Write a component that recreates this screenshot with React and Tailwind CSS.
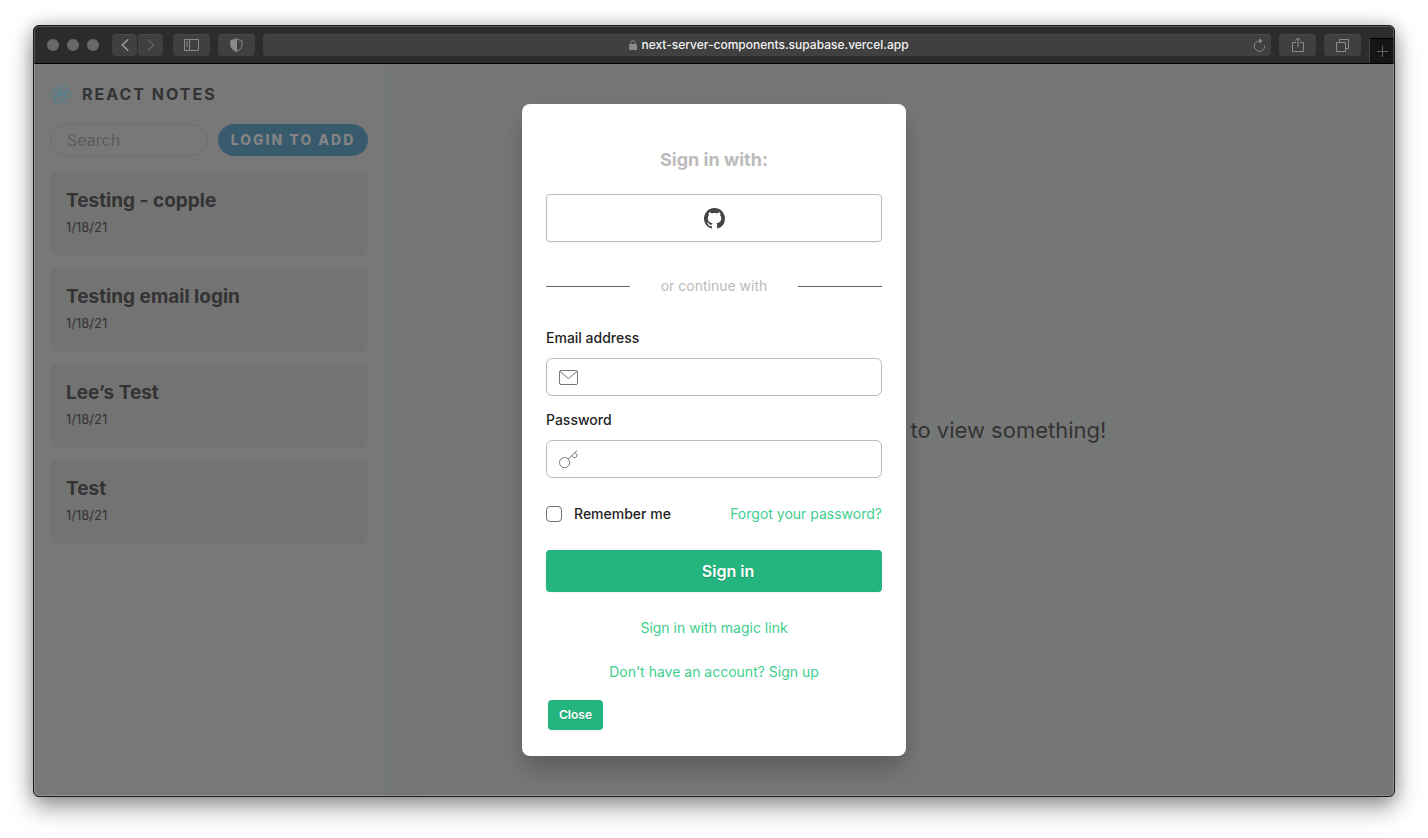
import { useState } from "react";

const notes = [
    { title: "Testing - copple", date: "1/18/21" },
    { title: "Testing email login", date: "1/18/21" },
    { title: "Lee’s Test", date: "1/18/21" },
    { title: "Test", date: "1/18/21" },
];

function ReactLogo() {
    return (
        <svg viewBox="-11.5 -10.5 23 21" className="h-[21px] w-[22px] text-[#4d8193]" fill="none" stroke="currentColor" strokeWidth="0.9" aria-hidden="true">
            <circle r="2" fill="currentColor" stroke="none" />
            <ellipse rx="11" ry="4.2" />
            <ellipse rx="11" ry="4.2" transform="rotate(60)" />
            <ellipse rx="11" ry="4.2" transform="rotate(120)" />
        </svg>
    );
}

function GithubIcon() {
    return (
        <svg viewBox="0 0 16 16" className="size-[21px]" fill="currentColor" aria-hidden="true">
            <path d="M8 0C3.58 0 0 3.58 0 8c0 3.54 2.29 6.53 5.47 7.59.4.07.55-.17.55-.38 0-.19-.01-.82-.01-1.49-2.01.37-2.53-.49-2.69-.94-.09-.23-.48-.94-.82-1.13-.28-.15-.68-.52-.01-.53.63-.01 1.08.58 1.23.82.72 1.21 1.87.87 2.33.66.07-.52.28-.87.51-1.07-1.78-.2-3.64-.89-3.64-3.95 0-.87.31-1.59.82-2.15-.08-.2-.36-1.02.08-2.12 0 0 .67-.21 2.2.82.64-.18 1.32-.27 2-.27s1.36.09 2 .27c1.53-1.04 2.2-.82 2.2-.82.44 1.1.16 1.92.08 2.12.51.56.82 1.27.82 2.15 0 3.07-1.87 3.75-3.65 3.95.29.25.54.73.54 1.48 0 1.07-.01 1.93-.01 2.2 0 .21.15.46.55.38A8.01 8.01 0 0 0 16 8c0-4.42-3.58-8-8-8z" />
        </svg>
    );
}

function MailIcon() {
    return (
        <svg viewBox="0 0 21 21" className="size-[21px]" fill="none" stroke="currentColor" strokeLinejoin="round" aria-hidden="true">
            <rect x="1.5" y="3.5" width="18" height="14" rx="1.5" />
            <path d="M2 4.5l8.5 7 8.5-7" />
        </svg>
    );
}

function KeyIcon() {
    return (
        <svg viewBox="0 0 21 21" className="size-[21px]" fill="none" stroke="currentColor" strokeLinecap="round" strokeLinejoin="round" aria-hidden="true">
            <circle cx="6.6" cy="13.6" r="5.1" />
            <path d="M10.2 10L18.8 1.8M13.8 6.6l2.2 2.2c1.600.2 3.200-1.300 3-2.900l-1.800-2.300" />
        </svg>
    );
}

function ToolButton({ label, className, children }) {
    return (
        <button
            aria-label={label}
            className={`flex h-[22px] shrink-0 items-center justify-center rounded border-t border-[#4a4a4a] bg-[#404040] text-[#8a8a8a] ${className}`}
        >
            {children}
        </button>
    );
}

function Toolbar() {
    return (
        <header className="flex h-[38px] items-center border-b border-black bg-[#2c2c2c]">
            <div className="flex gap-2 pl-[13px]">
                <span className="size-3 rounded-full bg-[#686868]" />
                <span className="size-3 rounded-full bg-[#686868]" />
                <span className="size-3 rounded-full bg-[#686868]" />
            </div>
            <div className="ml-[13px] flex gap-px">
                <ToolButton label="Back" className="w-[25px]">
                    <svg viewBox="0 0 8 12" className="h-3 w-2" fill="none" stroke="#a0a0a0" strokeWidth="1.4" strokeLinecap="round">
                        <path d="M6.8.7L1.2 6l5.6 5.3" />
                    </svg>
                </ToolButton>
                <ToolButton label="Forward" className="w-[25px]">
                    <svg viewBox="0 0 8 12" className="h-3 w-2" fill="none" stroke="#606060" strokeWidth="1.4" strokeLinecap="round">
                        <path d="M1.2.7L6.8 6l-5.6 5.3" />
                    </svg>
                </ToolButton>
            </div>
            <ToolButton label="Sidebar" className="ml-[10px] w-[37px]">
                <svg viewBox="0 0 15 12" className="h-3 w-[15px]" fill="none" stroke="currentColor">
                    <path d="M.5.5h14v11H.5zM5.5.5v11M2 3h2M2 5h2M2 7h2" />
                </svg>
            </ToolButton>
            <ToolButton label="Privacy report" className="ml-2 w-[37px]">
                <svg viewBox="0 0 13 14" className="h-3.5 w-[13px]" fill="none" stroke="currentColor">
                    <path d="M6.5.6C5 1.8 3 2.3 1 2.4V7c0 3 2.3 5 5.5 6.4C9.7 12 12 10 12 7V2.4C10 2.3 8 1.8 6.5.6z" />
                    <path d="M6.5.6C5 1.8 3 2.3 1 2.4V7c0 3 2.3 5 5.5 6.4z" fill="currentColor" />
                </svg>
            </ToolButton>
            <div className="ml-2 flex h-[22px] min-w-0 flex-1 items-center rounded border-t border-[#4a4a4a] bg-[#404040] pr-[5px] pl-[22px]">
                <div className="flex min-w-0 flex-1 items-center justify-center gap-1">
                    <svg viewBox="0 0 8 10" className="h-2.5 w-2 text-[#8a8a8a]" fill="currentColor" aria-hidden="true">
                        <rect y="4" width="8" height="6" rx=".8" />
                        <path d="M1.7 4.5V3a2.3 2.3 0 0 1 4.6 0v1.5" fill="none" stroke="currentColor" />
                    </svg>
                    <span className="truncate text-xs font-medium text-[#f2f2f2]">next-server-components.supabase.vercel.app</span>
                </div>
                <button aria-label="Reload" className="text-[#8a8a8a]">
                    <svg viewBox="0 0 13 14" className="h-3.5 w-[13px]" fill="none" stroke="currentColor">
                        <path d="M7.5 3A5.2 5.2 0 1 0 11.7 7.5" />
                        <path d="M6 .2l3.5 2.9L6 5.6z" fill="currentColor" stroke="none" />
                    </svg>
                </button>
            </div>
            <ToolButton label="Share" className="ml-2 w-[37px]">
                <svg viewBox="0 0 12 16" className="h-4 w-3" fill="none" stroke="currentColor">
                    <path d="M4 5.5H.5v9h11v-9H8M6 10V1M3.5 3.5L6 1l2.5 2.5" />
                </svg>
            </ToolButton>
            <ToolButton label="Show tabs" className="ml-2 w-[37px]">
                <svg viewBox="0 0 13 13" className="size-[13px]" fill="none" stroke="currentColor">
                    <path d="M.5 3.5h9v9h-9zM3.5 3.5v-3h9v9h-3" />
                </svg>
            </ToolButton>
            <button
                aria-label="New tab"
                className="ml-2 flex h-[25px] w-[25px] shrink-0 items-center justify-center self-end border-t border-l border-t-black border-l-[#444444] bg-[#151516] text-[#626262]"
            >
                <svg viewBox="0 0 11 11" className="size-[11px]" stroke="currentColor">
                    <path d="M5.5 0v11M0 5.5h11" />
                </svg>
            </button>
        </header>
    );
}

function Sidebar() {
    return (
        <aside className="z-10 w-[350px] shrink-0 bg-[#787878] px-4 shadow-[0_8px_24px_rgba(110,116,122,0.6)]">
            <div className="flex items-center gap-2.5 pt-[18px]">
                <ReactLogo />
                <strong className="text-base leading-6 font-bold tracking-[2px] text-[#333333]">REACT NOTES</strong>
            </div>
            <div className="mt-[18px] flex gap-2.5">
                <input
                    aria-label="Search notes"
                    placeholder="Search"
                    className="h-8 min-w-0 flex-1 rounded-full border border-[#6f6f6f] bg-transparent px-4 text-base text-[#333333] placeholder:text-[#5c5c5c] focus:outline-none"
                />
                <button className="h-8 w-[150px] rounded-full bg-[#385a6d] text-sm font-extrabold tracking-[2px] text-[#838383]">
                    LOGIN TO ADD
                </button>
            </div>
            <ul className="mt-4 space-y-3">
                {notes.map((note) => (
                    <li key={note.title} className="h-[84px] rounded-lg bg-[#737373] px-4 pt-4">
                        <strong className="block text-[19px] leading-[26px] font-bold text-[#333333]">{note.title}</strong>
                        <small className="mt-1 block text-[13px] leading-[18px] text-[#333333]">{note.date}</small>
                    </li>
                ))}
            </ul>
        </aside>
    );
}

function Field({ id, label, type, icon, value, onChange }) {
    return (
        <div>
            <label htmlFor={id} className="block text-sm leading-5 font-medium text-[#1f1f1f]">
                {label}
            </label>
            <div className="mt-2.5 flex h-[38px] items-center gap-2 rounded-md border border-[#bbbbbb] px-[11px] text-[#777777]">
                {icon}
                <input
                    id={id}
                    type={type}
                    value={value}
                    onChange={(e) => onChange(e.target.value)}
                    className="h-full min-w-0 flex-1 bg-transparent text-sm text-[#1f1f1f] focus:outline-none"
                />
            </div>
        </div>
    );
}

function SignIn({ onClose }) {
    const [email, setEmail] = useState("");
    const [password, setPassword] = useState("");
    const [remember, setRemember] = useState(false);

    return (
        <div role="dialog" aria-label="Sign in" className="w-96 rounded-lg bg-white px-6 pt-11 pb-[26px] shadow-[0_20px_25px_-5px_rgba(0,0,0,0.1),0_10px_20px_rgba(0,0,0,0.12)]">
            <h2 className="text-center text-lg leading-6 font-bold text-[#bbbbbb]">Sign in with:</h2>
            <button aria-label="Sign in with GitHub" className="mt-[22px] flex h-12 w-full items-center justify-center rounded border border-[#bbbbbb] text-[#444444] shadow-xs">
                <GithubIcon />
            </button>

            <div className="mt-[34px] flex items-center">
                <span className="h-px w-1/4 bg-[#666666]" />
                <span className="flex-1 text-center text-sm leading-5 text-[#bbbbbb]">or continue with</span>
                <span className="h-px w-1/4 bg-[#666666]" />
            </div>

            <form className="mt-8" onSubmit={(e) => e.preventDefault()}>
                <div className="space-y-3.5">
                    <Field id="email" label="Email address" type="email" icon={<MailIcon />} value={email} onChange={setEmail} />
                    <Field id="password" label="Password" type="password" icon={<KeyIcon />} value={password} onChange={setPassword} />
                </div>

                <div className="mt-[26px] flex items-center justify-between text-sm leading-5">
                    <label className="flex items-center gap-3 font-medium text-[#1f1f1f]">
                        <input
                            type="checkbox"
                            checked={remember}
                            onChange={(e) => setRemember(e.target.checked)}
                            className="size-4 appearance-none rounded border border-[#6b7280] bg-white checked:bg-[#24b47e]"
                        />
                        Remember me
                    </label>
                    <a href="#forgot" className="text-[#3ecf8e]">
                        Forgot your password?
                    </a>
                </div>

                <button type="submit" className="mt-[26px] h-[42px] w-full rounded bg-[#24b47e] pl-7 text-base font-semibold text-white shadow-xs text-shadow-xs">
                    Sign in
                </button>
            </form>

            <div className="mt-[26px] flex flex-col items-center gap-6 text-sm leading-5 text-[#3ecf8e]">
                <a href="#magic-link">Sign in with magic link</a>
                <a href="#sign-up">Don't have an account? Sign up</a>
            </div>
            <button onClick={onClose} className="mt-[18px] ml-0.5 block h-[30px] rounded bg-[#24b47e] px-[11px] text-xs font-semibold text-white shadow-xs text-shadow-2xs">
                Close
            </button>
        </div>
    );
}

export default function App() {
    const [open, setOpen] = useState(true);

    return (
        <div className="flex min-h-screen flex-col bg-white px-[33px] pt-[25px] pb-[41px] font-['Inter',sans-serif]">
            <div className="relative flex flex-1 flex-col overflow-hidden rounded-md border border-[#1c1c1e] bg-[#2c2c2c] shadow-[0_10px_24px_rgba(0,0,0,0.4),0_0_16px_rgba(0,0,0,0.2)]">
                <Toolbar />
                <div className="relative flex flex-1 overflow-hidden">
                    <Sidebar />
                    <main className="flex flex-1 items-center justify-center bg-[#757776]">
                        <p className="text-[22px] whitespace-nowrap text-[#333333]">Click a note on the left to view something!</p>
                    </main>
                    {open && (
                        <div className="absolute inset-0 z-20 flex items-start justify-center pt-10">
                            <SignIn onClose={() => setOpen(false)} />
                        </div>
                    )}
                </div>
                {/* light edge inside the window frame */}
                <div className="pointer-events-none absolute inset-0 z-30 rounded-[5px] border border-white/20" />
            </div>
        </div>
    );
}
